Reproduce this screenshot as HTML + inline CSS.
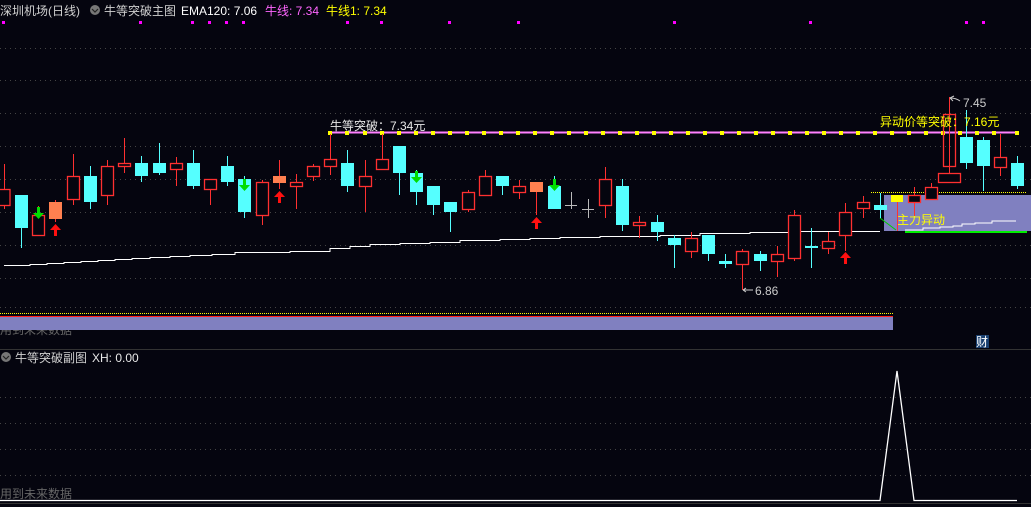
<!DOCTYPE html><html><head><meta charset="utf-8"><style>
html,body{margin:0;padding:0;background:#05050f;width:1031px;height:507px;overflow:hidden}
svg{display:block}
text{font-family:"Liberation Sans","Noto Sans CJK SC",sans-serif;font-size:12px}
</style></head><body>
<svg width="1031" height="507" viewBox="0 0 1031 507" xmlns="http://www.w3.org/2000/svg">
<rect width="1031" height="507" fill="#05050f"/>
<text x="0" y="15" fill="#d0d0d0">深圳机场(日线)</text>
<circle cx="95" cy="10" r="5" fill="#777"/><path d="M92 9 l3 3 l3 -3" stroke="#222" fill="none" stroke-width="1.2"/>
<text x="104" y="15" fill="#d0d0d0">牛等突破主图</text>
<text x="181" y="15" fill="#ffffff">EMA120: 7.06</text>
<text x="265" y="15" fill="#ff66ff">牛线: 7.34</text>
<text x="326" y="15" fill="#ffff00">牛线1: 7.34</text>
<g fill="#ff00ff">
<rect x="2" y="21" width="3" height="3"/><rect x="139" y="21" width="3" height="3"/><rect x="191" y="21" width="3" height="3"/><rect x="208" y="21" width="3" height="3"/><rect x="225" y="21" width="3" height="3"/><rect x="242" y="21" width="3" height="3"/><rect x="346" y="21" width="3" height="3"/><rect x="380" y="21" width="3" height="3"/><rect x="448" y="21" width="3" height="3"/><rect x="517" y="21" width="3" height="3"/><rect x="673" y="21" width="3" height="3"/><rect x="809" y="21" width="3" height="3"/><rect x="965" y="21" width="3" height="3"/><rect x="982" y="21" width="3" height="3"/>
</g>
<g stroke="#444" stroke-dasharray="1 4" stroke-width="1">
<line x1="0" y1="48.5" x2="1031" y2="48.5"/><line x1="0" y1="80.5" x2="1031" y2="80.5"/><line x1="0" y1="113.5" x2="1031" y2="113.5"/><line x1="0" y1="146.5" x2="1031" y2="146.5"/><line x1="0" y1="179.5" x2="1031" y2="179.5"/><line x1="0" y1="212.5" x2="1031" y2="212.5"/><line x1="0" y1="245.5" x2="1031" y2="245.5"/><line x1="0" y1="278.5" x2="1031" y2="278.5"/><line x1="0" y1="307.5" x2="1031" y2="307.5"/>
<line x1="0" y1="397.5" x2="1031" y2="397.5"/><line x1="0" y1="423.5" x2="1031" y2="423.5"/><line x1="0" y1="449.5" x2="1031" y2="449.5"/><line x1="0" y1="475.5" x2="1031" y2="475.5"/>
</g>
<text x="0" y="334" fill="#666" font-size="11">用到未来数据</text>
<line x1="0" y1="313.5" x2="893" y2="313.5" stroke="#ffff00" stroke-dasharray="1 1"/>
<line x1="0" y1="316.5" x2="893" y2="316.5" stroke="#ff2020"/>
<rect x="0" y="317" width="893" height="13" fill="#8080c0"/>
<rect x="884" y="195" width="147" height="36" fill="#8080c0"/>
<line x1="871" y1="192.5" x2="1027" y2="192.5" stroke="#ffff00" stroke-dasharray="1 1"/>
<line x1="905" y1="232" x2="1027" y2="232" stroke="#00ee00" stroke-width="2"/>
<path d="M905 230 H923 V228 H940 V227 H953 V226 H962 V224 H975 V223 H992 V221 H1016" stroke="#fff" fill="none"/>
<path d="M880 218 L896 230" stroke="#00cc00"/>
<text x="897" y="224" fill="#ffff00">主力异动</text>
<path d="M4 265.5 H30 V264.5 H47 V263.5 H64 V262.5 H81 V261.5 H98 V260.5 H115 V259.5 H132 V258.5 H150 V257.5 H170 V256.5 H190 V255.5 H212 V254.5 H235 V252.5 H290 V251.5 H330 V248.5 H350 V246.5 H370 V244.5 H400 V243.5 H430 V242.5 H460 V240.5 H500 V239.5 H530 V238.5 H560 V237.5 H600 V236.5 H660 V235.5 H700 V233.5 H750 V232.5 H790 V231.5 H880" stroke="#fff" fill="none"/>
<line x1="330" y1="132.5" x2="1017" y2="132.5" stroke="#ff80ff" stroke-width="2"/>
<g fill="#ffff00">
<rect x="328" y="131" width="4" height="4"/><rect x="345" y="131" width="4" height="4"/><rect x="363" y="131" width="4" height="4"/><rect x="380" y="131" width="4" height="4"/><rect x="397" y="131" width="4" height="4"/><rect x="414" y="131" width="4" height="4"/><rect x="431" y="131" width="4" height="4"/><rect x="448" y="131" width="4" height="4"/><rect x="465" y="131" width="4" height="4"/><rect x="482" y="131" width="4" height="4"/><rect x="499" y="131" width="4" height="4"/><rect x="516" y="131" width="4" height="4"/><rect x="533" y="131" width="4" height="4"/><rect x="550" y="131" width="4" height="4"/><rect x="567" y="131" width="4" height="4"/><rect x="584" y="131" width="4" height="4"/><rect x="601" y="131" width="4" height="4"/><rect x="618" y="131" width="4" height="4"/><rect x="635" y="131" width="4" height="4"/><rect x="652" y="131" width="4" height="4"/><rect x="669" y="131" width="4" height="4"/><rect x="686" y="131" width="4" height="4"/><rect x="703" y="131" width="4" height="4"/><rect x="720" y="131" width="4" height="4"/><rect x="737" y="131" width="4" height="4"/><rect x="754" y="131" width="4" height="4"/><rect x="771" y="131" width="4" height="4"/><rect x="788" y="131" width="4" height="4"/><rect x="805" y="131" width="4" height="4"/><rect x="822" y="131" width="4" height="4"/><rect x="839" y="131" width="4" height="4"/><rect x="856" y="131" width="4" height="4"/><rect x="873" y="131" width="4" height="4"/><rect x="890" y="131" width="4" height="4"/><rect x="907" y="131" width="4" height="4"/><rect x="924" y="131" width="4" height="4"/><rect x="941" y="131" width="4" height="4"/><rect x="958" y="131" width="4" height="4"/><rect x="975" y="131" width="4" height="4"/><rect x="992" y="131" width="4" height="4"/><rect x="1015" y="131" width="4" height="4"/>
</g>
<g stroke="#ff3030" stroke-width="1">
<line x1="4.5" y1="164" x2="4.5" y2="209"/><line x1="38.5" y1="206" x2="38.5" y2="236"/><line x1="55.5" y1="200" x2="55.5" y2="222"/><line x1="73.5" y1="154" x2="73.5" y2="205"/><line x1="107.5" y1="160" x2="107.5" y2="205"/><line x1="124.5" y1="138" x2="124.5" y2="173"/><line x1="176.5" y1="157" x2="176.5" y2="186"/><line x1="210.5" y1="179" x2="210.5" y2="205"/><line x1="262.5" y1="180" x2="262.5" y2="225"/><line x1="279.5" y1="160" x2="279.5" y2="189"/><line x1="296.5" y1="174" x2="296.5" y2="209"/><line x1="313.5" y1="164" x2="313.5" y2="181"/><line x1="330.5" y1="134" x2="330.5" y2="175"/><line x1="365.5" y1="160" x2="365.5" y2="212"/><line x1="382.5" y1="134" x2="382.5" y2="169"/><line x1="468.5" y1="190" x2="468.5" y2="212"/><line x1="485.5" y1="170" x2="485.5" y2="195"/><line x1="519.5" y1="180" x2="519.5" y2="199"/><line x1="536.5" y1="182" x2="536.5" y2="215"/><line x1="605.5" y1="167" x2="605.5" y2="218"/><line x1="639.5" y1="216" x2="639.5" y2="238"/><line x1="691.5" y1="232" x2="691.5" y2="258"/><line x1="742.5" y1="249" x2="742.5" y2="290"/><line x1="777.5" y1="246" x2="777.5" y2="277"/><line x1="794.5" y1="210" x2="794.5" y2="261"/><line x1="828.5" y1="232" x2="828.5" y2="254"/><line x1="845.5" y1="203" x2="845.5" y2="251"/><line x1="863.5" y1="196" x2="863.5" y2="218"/><line x1="897.5" y1="195" x2="897.5" y2="231"/><line x1="914.5" y1="187" x2="914.5" y2="216"/><line x1="931.5" y1="183" x2="931.5" y2="200"/><line x1="949.5" y1="97" x2="949.5" y2="173"/><line x1="1000.5" y1="134" x2="1000.5" y2="176"/>
</g>
<g stroke="#55ffff" stroke-width="1">
<line x1="21.5" y1="195" x2="21.5" y2="248"/><line x1="90.5" y1="166" x2="90.5" y2="209"/><line x1="141.5" y1="156" x2="141.5" y2="182"/><line x1="159.5" y1="143" x2="159.5" y2="175"/><line x1="193.5" y1="150" x2="193.5" y2="189"/><line x1="227.5" y1="156" x2="227.5" y2="186"/><line x1="244.5" y1="176" x2="244.5" y2="218"/><line x1="347.5" y1="150" x2="347.5" y2="192"/><line x1="399.5" y1="146" x2="399.5" y2="195"/><line x1="416.5" y1="170" x2="416.5" y2="205"/><line x1="433.5" y1="186" x2="433.5" y2="215"/><line x1="450.5" y1="202" x2="450.5" y2="232"/><line x1="502.5" y1="176" x2="502.5" y2="195"/><line x1="554.5" y1="176" x2="554.5" y2="209"/><line x1="622.5" y1="179" x2="622.5" y2="231"/><line x1="657.5" y1="215" x2="657.5" y2="241"/><line x1="674.5" y1="235" x2="674.5" y2="268"/><line x1="708.5" y1="235" x2="708.5" y2="261"/><line x1="725.5" y1="254" x2="725.5" y2="268"/><line x1="760.5" y1="251" x2="760.5" y2="271"/><line x1="811.5" y1="228" x2="811.5" y2="268"/><line x1="880.5" y1="193" x2="880.5" y2="218"/><line x1="966.5" y1="110" x2="966.5" y2="169"/><line x1="983.5" y1="137" x2="983.5" y2="191"/><line x1="1017.5" y1="156" x2="1017.5" y2="189"/>
</g>
<g stroke="#bbb"><line x1="565" y1="205.5" x2="577" y2="205.5"/><line x1="571.5" y1="192" x2="571.5" y2="209"/><line x1="582" y1="209.5" x2="594" y2="209.5"/><line x1="588.5" y1="199" x2="588.5" y2="218"/></g>
<g stroke="#ff3030" fill="#05050f" stroke-width="1.3">
<rect x="-1" y="189.5" width="11" height="16"/><rect x="32.5" y="215.5" width="12" height="20"/><rect x="67.5" y="176.5" width="12" height="23"/><rect x="101.5" y="166.5" width="12" height="29"/><rect x="118.5" y="163.5" width="12" height="3"/><rect x="170.5" y="163.5" width="12" height="6"/><rect x="204.5" y="179.5" width="12" height="10"/><rect x="256.5" y="182.5" width="12" height="33"/><rect x="290.5" y="182.5" width="12" height="4"/><rect x="307.5" y="166.5" width="12" height="10"/><rect x="324.5" y="159.5" width="12" height="7"/><rect x="359.5" y="176.5" width="12" height="10"/><rect x="376.5" y="159.5" width="12" height="10"/><rect x="462.5" y="192.5" width="12" height="17"/><rect x="479.5" y="176.5" width="12" height="19"/><rect x="513.5" y="186.5" width="12" height="6"/><rect x="599.5" y="179.5" width="12" height="26"/><rect x="633.5" y="222.5" width="12" height="3"/><rect x="685.5" y="238.5" width="12" height="13"/><rect x="736.5" y="251.5" width="12" height="13"/><rect x="771.5" y="254.5" width="12" height="7"/><rect x="788.5" y="215.5" width="12" height="43"/><rect x="822.5" y="241.5" width="12" height="7"/><rect x="839.5" y="212.5" width="12" height="23"/><rect x="857.5" y="202.5" width="12" height="6"/><rect x="908.5" y="195.5" width="12" height="7"/><rect x="925.5" y="187.5" width="12" height="12"/><rect x="943.5" y="114.5" width="12" height="52" fill="none"/><rect x="938.5" y="173.5" width="22" height="9"/><rect x="994.5" y="157.5" width="12" height="10"/>
</g>
<rect x="49" y="202" width="13" height="17" fill="#ff8050"/><rect x="273" y="176" width="13" height="7" fill="#ff8050"/><rect x="530" y="182" width="13" height="10" fill="#ff8050"/>
<rect x="891" y="195" width="12" height="7" fill="#ffff00"/>
<g fill="#55ffff">
<rect x="15" y="195" width="13" height="33"/><rect x="84" y="176" width="13" height="26"/><rect x="135" y="163" width="13" height="13"/><rect x="153" y="163" width="13" height="10"/><rect x="187" y="163" width="13" height="23"/><rect x="221" y="166" width="13" height="16"/><rect x="238" y="179" width="13" height="33"/><rect x="341" y="163" width="13" height="23"/><rect x="393" y="146" width="13" height="27"/><rect x="410" y="173" width="13" height="19"/><rect x="427" y="186" width="13" height="19"/><rect x="444" y="202" width="13" height="10"/><rect x="496" y="176" width="13" height="10"/><rect x="548" y="186" width="13" height="23"/><rect x="616" y="186" width="13" height="39"/><rect x="651" y="222" width="13" height="10"/><rect x="668" y="238" width="13" height="7"/><rect x="702" y="235" width="13" height="19"/><rect x="719" y="261" width="13" height="3"/><rect x="754" y="254" width="13" height="7"/><rect x="805" y="246" width="13" height="2"/><rect x="874" y="205" width="13" height="5"/><rect x="960" y="137" width="13" height="26"/><rect x="977" y="140" width="13" height="26"/><rect x="1011" y="163" width="13" height="23"/>
</g>
<g fill="#00dd00">
<path d="M37 207h3v6h4l-5.5 6l-5.5-6h4z"/><path d="M243 179h3v6h4l-5.5 6l-5.5-6h4z"/><path d="M415 171h3v6h4l-5.5 6l-5.5-6h4z"/><path d="M553 179h3v6h4l-5.5 6l-5.5-6h4z"/>
</g>
<g fill="#ff1010">
<path d="M55.5 224l5.5 6h-4v6h-3v-6h-4z"/><path d="M279.5 191l5.5 6h-4v6h-3v-6h-4z"/><path d="M536.5 217l5.5 6h-4v6h-3v-6h-4z"/><path d="M845.5 252l5.5 6h-4v6h-3v-6h-4z"/>
</g>
<text x="330" y="130" fill="#e8e8e8">牛等突破：7.34元</text>
<text x="880" y="126" fill="#ffff00">异动价等突破：7.16元</text>
<path d="M950 98 l4 -2 M950 98 l3 3 M950 98 q6 0 10 3" stroke="#ccc" fill="none"/>
<text x="963" y="107" fill="#ccc">7.45</text>
<path d="M743 290 H753 M743 290 l3 -2 M743 290 l3 2" stroke="#ccc" fill="none"/>
<text x="755" y="295" fill="#ccc">6.86</text>
<line x1="0" y1="349.5" x2="1031" y2="349.5" stroke="#333"/>
<rect x="976" y="335" width="13" height="13" fill="#1a4070"/><text x="976" y="346" fill="#fff" font-size="11">财</text>
<circle cx="6" cy="357" r="5" fill="#777"/><path d="M3 356 l3 3 l3 -3" stroke="#222" fill="none" stroke-width="1.2"/>
<text x="15" y="362" fill="#d0d0d0">牛等突破副图</text>
<text x="92" y="362" fill="#e8e8e8">XH: 0.00</text>
<text x="0" y="498" fill="#666" font-size="11">用到未来数据</text>
<path d="M0 500.5 H880 L897 371 L914 500.5 H1017" stroke="#fff" fill="none" stroke-width="1.3"/>
<line x1="0" y1="503.5" x2="1031" y2="503.5" stroke="#333"/>
</svg>
</body></html>
